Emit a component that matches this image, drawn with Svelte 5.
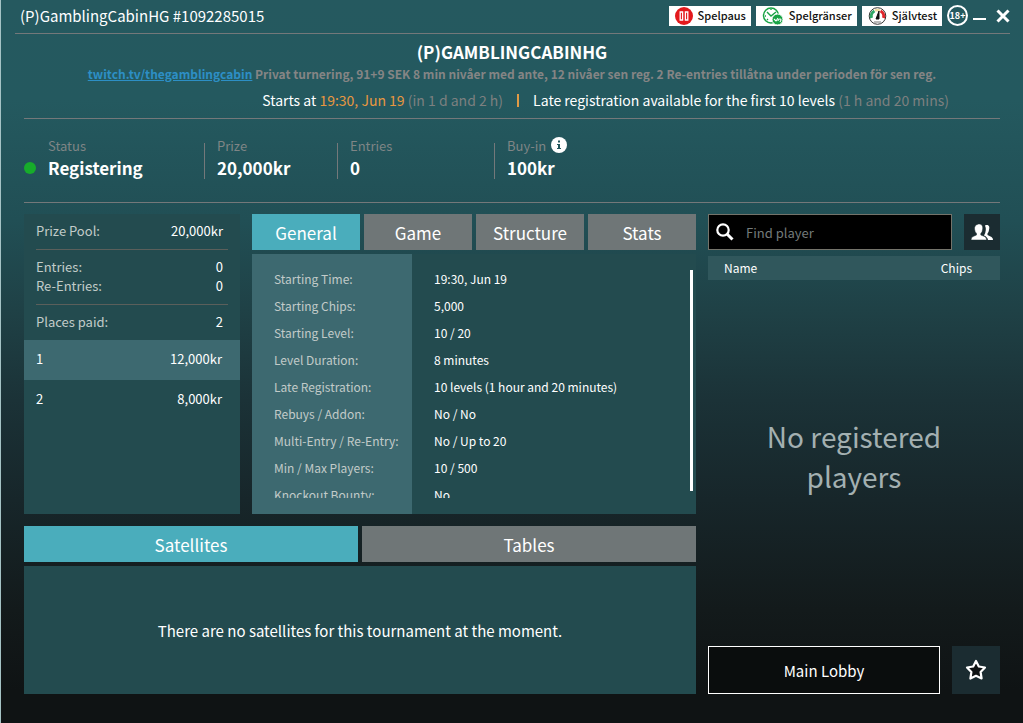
<script>
  const stats = [
    { label: 'Status', value: 'Registering', dot: true },
    { label: 'Prize', value: '20,000kr' },
    { label: 'Entries', value: '0' },
    { label: 'Buy-in', value: '100kr', info: true }
  ];

  const payouts = [
    { place: 1, prize: '12,000kr' },
    { place: 2, prize: '8,000kr' }
  ];

  const details = [
    ['Starting Time:', '19:30, Jun 19'],
    ['Starting Chips:', '5,000'],
    ['Starting Level:', '10 / 20'],
    ['Level Duration:', '8 minutes'],
    ['Late Registration:', '10 levels (1 hour and 20 minutes)'],
    ['Rebuys / Addon:', 'No / No'],
    ['Multi-Entry / Re-Entry:', 'No / Up to 20'],
    ['Min / Max Players:', '10 / 500'],
    ['Knockout Bounty:', 'No']
  ];

  const infoTabs = ['General', 'Game', 'Structure', 'Stats'];
  const lowerTabs = ['Satellites', 'Tables'];

  let infoTab = $state('General');
  let lowerTab = $state('Satellites');
  let search = $state('');
</script>

<div class="lobby">
  <header class="titlebar">
    <span class="window-title">(P)GamblingCabinHG #1092285015</span>
    <div class="tools">
      <button class="badge">
        <svg width="18" height="18" viewBox="0 0 18 18" aria-hidden="true">
          <circle cx="9" cy="9" r="9" fill="#e3191c" />
          <path d="M5.200 5h2.400v8H5.200zM10.400 5h2.400v8h-2.400z" fill="none" stroke="#fff" stroke-width="1.300" />
        </svg>
        Spelpaus
      </button>
      <button class="badge">
        <svg width="22" height="18" viewBox="0 0 22 18" fill="none" aria-hidden="true">
          <circle cx="9" cy="8.500" r="7.500" stroke="#18a345" stroke-width="1.500" />
          <path d="M5 5l4 4 5-4M3 9h1M9 2v1M5 13l1-1" stroke="#18a345" stroke-width="1.400" />
          <circle cx="15.500" cy="12.500" r="5.500" fill="#18a345" stroke="#fff" />
          <path d="M12 12l2 2 2-3M16 14q0-2 2-2t0 3" stroke="#fff" stroke-width="1.100" />
        </svg>
        Spelgränser
      </button>
      <button class="badge">
        <svg width="19" height="18" viewBox="0 0 19 18" fill="none" aria-hidden="true">
          <circle cx="9.500" cy="9" r="8.300" fill="#fff" stroke="#333" stroke-width="1" />
          <path d="M3.500 11a6 6 0 0 1 3-7" stroke="#2fa866" stroke-width="3" />
          <path d="M7 3.600a6 6 0 0 1 5 0" stroke="#f1dfa4" stroke-width="2.500" />
          <path d="M12.500 4a6 6 0 0 1 3 7" stroke="#e0282d" stroke-width="3" />
          <path d="M8 12l3-8v8z" fill="#111" stroke="#111" />
          <path d="M6 15h7" stroke="#777" />
        </svg>
        Självtest
      </button>
      <button class="age" aria-label="Age limit 18+">18+</button>
      <button class="window-btn" aria-label="Minimize">
        <svg width="14" height="14" viewBox="0 0 14 14"><path d="M0 10h13" stroke="#fff" stroke-width="2" /></svg>
      </button>
      <button class="window-btn close" aria-label="Close">
        <svg width="14" height="14" viewBox="0 0 14 14"><path d="M1.500 1.500l11 11M12.500 1.500l-11 11" stroke="#fff" stroke-width="3" /></svg>
      </button>
    </div>
  </header>

  <section class="intro">
    <h1>(P)GAMBLINGCABINHG</h1>
    <p class="description">
      <a href="https://twitch.tv/thegamblingcabin">twitch.tv/thegamblingcabin</a>
      Privat turnering, 91+9 SEK 8 min nivåer med ante, 12 nivåer sen reg. 2 Re-entries tillåtna under perioden för sen reg.
    </p>
    <p class="schedule">
      <span>Starts at <span class="orange">19:30, Jun 19</span> <span class="muted">(in 1 d and 2 h)</span></span>
      <span class="bar"></span>
      <span>Late registration available for the first 10 levels <span class="muted">(1 h and 20 mins)</span></span>
    </p>
  </section>

  <section class="stats">
    {#each stats as stat}
      <div class="stat" class:with-dot={stat.dot}>
        <span class="stat-label">
          {stat.label}
          {#if stat.info}
            <svg width="16" height="16" viewBox="0 0 16 16" aria-hidden="true">
              <circle cx="8" cy="8" r="8" fill="#fff" />
              <path d="M7 3.500h2v2H7zM6 7h3v4h1v1H6v-1h1V8H6z" fill="#22565c" />
            </svg>
          {/if}
        </span>
        <strong>{#if stat.dot}<i class="dot"></i>{/if}{stat.value}</strong>
      </div>
    {/each}
  </section>

  <main>
    <div class="left">
      <div class="upper">
        <section class="card prizes">
          <dl class="summary">
            <div class="group"><div><dt>Prize Pool:</dt><dd>20,000kr</dd></div></div>
            <div class="group">
              <div><dt>Entries:</dt><dd>0</dd></div>
              <div><dt>Re-Entries:</dt><dd>0</dd></div>
            </div>
            <div class="group"><div><dt>Places paid:</dt><dd>2</dd></div></div>
          </dl>
          <ul class="payouts">
            {#each payouts as row}
              <li><span>{row.place}</span><span>{row.prize}</span></li>
            {/each}
          </ul>
        </section>

        <section class="info">
          <div class="tabs">
            {#each infoTabs as tab}
              <button class:active={infoTab === tab} onclick={() => (infoTab = tab)}>{tab}</button>
            {/each}
          </div>
          <div class="card details">
            <dl>
              {#each details as [label, value]}
                <div><dt>{label}</dt><dd>{value}</dd></div>
              {/each}
            </dl>
            <div class="thumb"></div>
          </div>
        </section>
      </div>

      <section class="lower">
        <div class="tabs">
          {#each lowerTabs as tab}
            <button class:active={lowerTab === tab} onclick={() => (lowerTab = tab)}>{tab}</button>
          {/each}
        </div>
        <div class="card empty">There are no satellites for this tournament at the moment.</div>
      </section>
    </div>

    <aside>
      <div class="search-row">
        <label class="search">
          <svg width="18" height="18" viewBox="0 0 18 18" fill="none" stroke="#fff" aria-hidden="true">
            <circle cx="7" cy="7" r="5.700" stroke-width="2.200" />
            <path d="M11 11l5.500 5.500" stroke-width="3" />
          </svg>
          <input type="text" placeholder="Find player" aria-label="Find player" bind:value={search} />
        </label>
        <button class="square people" aria-label="Players">
          <svg width="22" height="17" viewBox="0 0 22 17" fill="#fff" aria-hidden="true">
            <path d="M14 1.500C18 0 19 3 18 6q-.3 2-1.500 3.500V11l4 2q1.500 1 1.500 3h-5q-.5-3-4-4.500 1.700-3 1.800-5.500T14 1.500z" />
            <path d="M7.500 0C11 0 12 2 11.700 5q-.3 3-1.900 4.500V11l3.700 1.500Q15.500 13.300 15.700 16H0q0-2.700 2-3.500L5.500 11V9.500Q3.800 8 3.500 5 3.200 1 7.500 0z" stroke="#1b2c31" stroke-width=".5" />
          </svg>
        </button>
      </div>
      <table>
        <thead>
          <tr><th>Name</th><th class="chips">Chips</th></tr>
        </thead>
      </table>
      <p class="no-players">No registered players</p>
      <div class="actions">
        <button class="main-lobby">Main Lobby</button>
        <button class="square favourite" aria-label="Add to favourites">
          <svg width="22" height="22" viewBox="0 0 22 22" aria-hidden="true">
            <path
              d="M11 2l2.800 5.500 6.200 1-4.400 4.500 1 6.500-5.600-2.700-5.600 2.700 1-6.500L2 8.500l6.200-1z"
              fill="#0f1314" stroke="#fff" stroke-width="2.200" stroke-linejoin="round" />
          </svg>
        </button>
      </div>
    </aside>
  </main>
</div>

<style>
  :global(body) {
    margin: 0;
    background: #0f1314;
  }

  .lobby {
    box-sizing: border-box;
    min-height: 100vh;
    display: flex;
    flex-direction: column;
    padding: 0 23px 29px;
    border-left: 1px solid #a5c3c5;
    background: linear-gradient(#25595f 0, #24595f 100px, #214f55 220px, #1f4146 310px, #1b3237 400px, #17262a 500px, #131a1b 610px, #0f1314 690px);
    color: #fff;
    font-family: 'Noto Sans CJK SC', 'Noto Sans', sans-serif;
    font-size: 13px;
    line-height: 19px;
  }

  h1, p, dl, dd, ul {
    margin: 0;
    padding: 0;
  }

  button {
    border: 0;
    padding: 0;
    color: inherit;
    font: inherit;
    cursor: pointer;
  }

  svg {
    display: block;
    flex: none;
  }

  .titlebar {
    box-sizing: border-box;
    display: flex;
    justify-content: space-between;
    align-items: center;
    height: 34px;
    margin: 0 -10px 0 -9px;
    padding-bottom: 2px;
    border-bottom: 1px solid #74787a;
  }

  .window-title {
    padding-left: 5px;
    font-size: 15px;
  }

  .tools {
    display: flex;
    align-items: center;
    gap: 5px;
  }

  .badge {
    display: flex;
    align-items: center;
    gap: 5px;
    height: 20px;
    padding: 0 5px 0 6px;
    background: #fff;
    color: #111;
    font-size: 11px;
    font-weight: 500;
  }

  .age {
    box-sizing: border-box;
    width: 21px;
    height: 21px;
    border: 2px solid #fff;
    border-radius: 50%;
    background: none;
    font-size: 9px;
    line-height: 17px;
    font-weight: 700;
  }

  .window-btn {
    background: none;
  }

  .close {
    margin-left: 4px;
  }

  .intro {
    display: flex;
    flex-direction: column;
    align-items: center;
    height: 77px;
    padding-top: 7px;
    border-bottom: 1px solid #74787a;
  }

  h1 {
    font-size: 17px;
    line-height: 22px;
  }

  .description {
    color: #858585;
    font-size: 12px;
    line-height: 22px;
    font-weight: 700;
  }

  .description a {
    color: #2d8fc5;
  }

  .schedule {
    display: flex;
    align-self: flex-end;
    align-items: center;
    margin-right: 51px;
    font-size: 14px;
    line-height: 30px;
  }

  .bar {
    width: 2px;
    height: 13px;
    margin: 0 14px;
    background: #e09a45;
  }

  .orange {
    color: #e8973f;
  }

  .muted {
    color: #7d8080;
  }

  .stats {
    display: grid;
    grid-template-columns: 180px 133px 157px 1fr;
    padding: 24px 0 23px;
    border-bottom: 1px solid #74787a;
  }

  .stat {
    height: 36px;
    padding-left: 12px;
    border-left: 1px solid #74787a;
  }

  .stat.with-dot {
    padding-left: 24px;
    border-left: 0;
  }

  .stat-label {
    display: flex;
    align-items: center;
    gap: 5px;
    height: 16px;
    margin-top: -6px;
    color: #7f8586;
  }

  .stat strong {
    display: flex;
    align-items: center;
    margin-top: 3px;
    font-size: 17px;
    line-height: 24px;
  }

  .dot {
    width: 12px;
    height: 12px;
    margin: 0 12px 0 -24px;
    border-radius: 50%;
    background: #17ac2b;
  }

  main {
    flex: 1;
    display: grid;
    grid-template-columns: minmax(0, 672fr) minmax(0, 292fr);
    gap: 12px;
    padding-top: 11px;
  }

  .left, .lower, .info, aside {
    display: flex;
    flex-direction: column;
  }

  .left {
    gap: 12px;
  }

  .upper {
    display: grid;
    grid-template-columns: minmax(0, 216fr) minmax(0, 444fr);
    gap: 12px;
  }

  .card {
    background: #234b4f;
  }

  .info, .lower {
    gap: 4px;
  }

  .lower {
    flex: 1;
  }

  .summary {
    padding: 0 12px;
  }

  .group {
    padding: 7px 0 9px;
    border-bottom: 1px solid #5b5f5b;
  }

  .group:last-child {
    border-bottom: 0;
  }

  .group div {
    display: flex;
    justify-content: space-between;
    padding-right: 5px;
  }

  dt {
    color: #c2cbc9;
  }

  .payouts {
    list-style: none;
  }

  .payouts li {
    display: flex;
    justify-content: space-between;
    padding: 0 18px 2px 12px;
    line-height: 38px;
  }

  .payouts li:nth-child(odd) {
    background: #3d6970;
  }

  .tabs {
    display: flex;
    gap: 4px;
  }

  .tabs button {
    flex: 1 1 0;
    height: 36px;
    background: #6f7677;
    font-size: 17px;
  }

  .tabs button.active {
    background: #4aadbc;
  }

  .details {
    display: flex;
    gap: 3px;
    padding: 16px 3px 16px 0;
    background: linear-gradient(90deg, #3d6970 160px, #234b4f 160px);
  }

  .details dl {
    flex: 1;
    height: 228px;
    overflow-y: auto;
    scrollbar-width: none;
    font-size: 12px;
    line-height: 27px;
  }

  .details dl div {
    display: grid;
    grid-template-columns: 160px 1fr;
    height: 27px;
  }

  .details dt, .details dd {
    padding-left: 22px;
    margin-top: -5px;
  }

  .thumb {
    width: 3px;
    height: 221px;
    background: #fff;
  }

  .empty {
    flex: 1;
    display: flex;
    align-items: center;
    justify-content: center;
    font-size: 15px;
  }

  .search-row, .actions {
    display: flex;
    gap: 12px;
  }

  .search {
    flex: 1;
    min-width: 0;
    box-sizing: border-box;
    display: flex;
    align-items: center;
    gap: 12px;
    height: 36px;
    padding: 0 7px;
    border: 1px solid #74736a;
    background: #000;
  }

  .search input {
    flex: 1;
    min-width: 0;
    padding: 0;
    border: 0;
    outline: 0;
    background: none;
    color: #fff;
    font: inherit;
  }

  .search input::placeholder {
    color: #747b7b;
    opacity: 1;
  }

  .square {
    display: grid;
    place-items: center;
    width: 36px;
    background: #1b2c31;
  }

  table {
    width: 100%;
    margin-top: 6px;
    border-collapse: collapse;
    background: #30575c;
    font-size: 12px;
    line-height: 24px;
  }

  th {
    padding: 0 0 0 16px;
    font-weight: 400;
    text-align: left;
  }

  th.chips {
    padding: 0 28px 0 0;
    text-align: right;
  }

  .no-players {
    flex: 1;
    display: flex;
    align-items: center;
    align-self: center;
    width: 200px;
    padding-bottom: 14px;
    color: #a3b0b1;
    font-size: 28px;
    line-height: 40px;
    text-align: center;
  }

  .main-lobby {
    flex: 1;
    height: 48px;
    border: 1px solid #fff;
    background: #0a0d0d;
    font-size: 15px;
  }

  .favourite {
    width: 48px;
  }
</style>
